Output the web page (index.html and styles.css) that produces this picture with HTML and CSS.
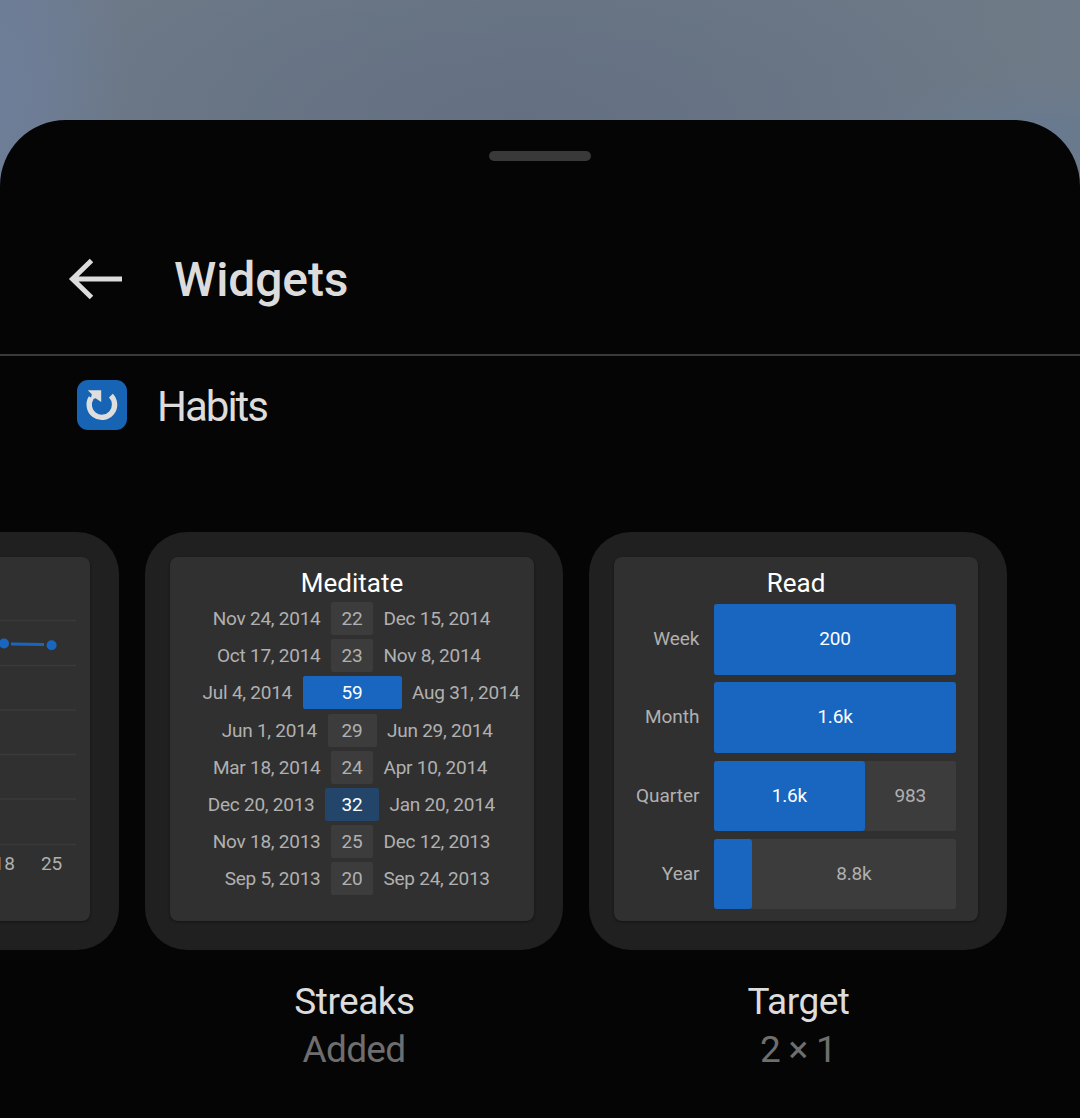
FILE: index.html
```html
<!DOCTYPE html>
<html lang="en">
<head>
<meta charset="utf-8">
<title>Widgets</title>
<link rel="stylesheet" href="styles.css">
</head>
<body>
<main class="sheet">
  <div class="handle"></div>
  <header class="header">
    <svg class="back" width="56" height="44" viewBox="0 0 56 44"><path d="M55 22H5M24.500 3.500L5.500 22l19 18.500" fill="none" stroke="#dcdcdc" stroke-width="5"/></svg>
    <h1 class="title">Widgets</h1>
  </header>
  <section class="app">
    <svg class="app-icon" width="50" height="50" viewBox="0 0 50 50">
      <rect width="50" height="50" rx="11" fill="#1764b4"/>
      <path d="M33.900 15.700A12.700 12.700 0 1 1 14.200 17.800" fill="none" stroke="#dedede" stroke-width="5.400"/>
      <path d="M10.800 10.300H24.200V22L18.500 18.200L13.500 20L14.800 14.300Z" fill="#dedede"/>
    </svg>
    <h2 class="app-name">Habits</h2>
  </section>
  <div class="carousel">
    <article class="item">
      <div class="card"><div class="preview">
        <svg class="chart" width="364" height="364" viewBox="0 0 364 364">
          <path d="M20 63.500H350M20 108.500H350M20 153H350M20 197.500H350M20 242H350M20 287.500H350" stroke="#3a3a3a" stroke-width="1.500"/>
          <path d="M285 87L318 87.600" stroke="#1866c0" stroke-width="3"/>
          <circle cx="278" cy="86.500" r="5" fill="#1866c0"/><circle cx="325.600" cy="88.200" r="5" fill="#1866c0"/>
          <g class="axis"><text x="278.300" y="313.300">18</text><text x="325.600" y="313.300">25</text></g>
        </svg>
      </div></div>
    </article>
    <article class="item">
      <div class="card"><div class="preview">
        <h3 class="habit">Meditate</h3>
        <div class="streaks">
          <div class="streak"><span class="from">Nov 24, 2014</span><b class="run" style="width:42px">22</b><span>Dec 15, 2014</span></div>
          <div class="streak"><span class="from">Oct 17, 2014</span><b class="run" style="width:42px">23</b><span>Nov 8, 2014</span></div>
          <div class="streak"><span class="from">Jul 4, 2014</span><b class="run best" style="width:99px">59</b><span>Aug 31, 2014</span></div>
          <div class="streak"><span class="from">Jun 1, 2014</span><b class="run" style="width:49px">29</b><span>Jun 29, 2014</span></div>
          <div class="streak"><span class="from">Mar 18, 2014</span><b class="run" style="width:42px">24</b><span>Apr 10, 2014</span></div>
          <div class="streak"><span class="from">Dec 20, 2013</span><b class="run good" style="width:54px">32</b><span>Jan 20, 2014</span></div>
          <div class="streak"><span class="from">Nov 18, 2013</span><b class="run" style="width:42px">25</b><span>Dec 12, 2013</span></div>
          <div class="streak"><span class="from">Sep 5, 2013</span><b class="run" style="width:42px">20</b><span>Sep 24, 2013</span></div>
        </div>
      </div></div>
      <h3 class="name">Streaks</h3>
      <p class="size">Added</p>
    </article>
    <article class="item">
      <div class="card"><div class="preview">
        <h3 class="habit">Read</h3>
        <div class="targets">
          <span class="period">Week</span><div class="bar"><b class="done" style="width:100%">200</b></div>
          <span class="period">Month</span><div class="bar"><b class="done" style="width:100%">1.6k</b></div>
          <span class="period">Quarter</span><div class="bar"><b class="done" style="width:62.200%">1.6k</b><span class="left">983</span></div>
          <span class="period">Year</span><div class="bar"><b class="done" style="width:15.600%"></b><span class="left">8.8k</span></div>
        </div>
      </div></div>
      <h3 class="name">Target</h3>
      <p class="size">2 × 1</p>
    </article>
  </div>
</main>
</body>
</html>
```
FILE: styles.css
```css
* { box-sizing: border-box; margin: 0; }
body {
  height: 1118px;
  padding-top: 120px;
  overflow: hidden;
  font-family: Roboto, "Liberation Sans", sans-serif;
  background:
    radial-gradient(ellipse 130px 260px at 0 90px, #6e7e98 0%, #6e7e9800 100%),
    radial-gradient(ellipse 180px 60px at 1040px 135px, #687a90 0%, #687a9000 100%),
    radial-gradient(ellipse 520px 190px at 520px 120px, #647082 0%, #64708200 100%),
    linear-gradient(90deg, #6d7b90, #6d7987 12%, #697685 50%, #6f7a87);
}
.sheet {
  height: 998px;
  padding-top: 31px;
  background: #050505;
  border-radius: 66px 66px 0 0;
  overflow: hidden;
}
.handle { width: 102px; height: 10px; margin: 0 auto; border-radius: 5px; background: #393939; }
.header {
  display: flex;
  align-items: center;
  gap: 50px;
  height: 195px;
  padding: 42px 0 0 67px;
  border-bottom: 2px solid #3a3a3a;
}
.back { flex: none; margin-right: 1px; }
.title { padding-top: 2px; font-size: 48px; line-height: 56px; font-weight: 500; letter-spacing: -0.100px; color: #dcdcdc; }
.app { display: flex; align-items: center; gap: 30px; height: 50px; margin: 24px 0 0 77px; }
.app-name { padding-top: 3px; font-size: 42px; line-height: 50px; font-weight: 400; letter-spacing: -2px; color: #dcdcdc; }
.carousel { display: flex; gap: 26px; margin: 102px 0 0 -299px; }
.item { flex: 0 0 418px; text-align: center; }
.card { height: 418px; padding: 25px; border-radius: 42px; background: #202020; }
.preview {
  width: 364px;
  height: 364px;
  border-radius: 8px;
  background: #303030;
  box-shadow: 0 1px 3px #0006;
  color: #b0b0b0;
  font-size: 19px;
}
.chart { display: block; }
.axis { fill: #b0b0b0; text-anchor: middle; }
.habit { height: 45px; padding-top: 10px; font-size: 26px; line-height: 32px; font-weight: 400; color: #fff; }
.streaks { display: flex; flex-direction: column; gap: 4.200px; }
.streak {
  display: grid;
  grid-template: 33px / 1fr auto 1fr;
  gap: 10.500px;
  line-height: 33.600px;
  letter-spacing: -0.250px;
  text-align: left;
  white-space: nowrap;
}
.from { text-align: right; }
.run { border-radius: 2px; background: #3c3c3c; font-weight: 400; text-align: center; }
.best { background: #1866c0; color: #fff; }
.good { background: #24456a; color: #fff; }
.targets {
  display: grid;
  grid-template-columns: 85.500px 242px;
  grid-auto-rows: 70.300px;
  gap: 7.900px 14.500px;
  padding-top: 2.300px;
  line-height: 70px;
}
.period { text-align: right; }
.bar { display: flex; background: #3c3c3c; border-radius: 2px; letter-spacing: -0.200px; }
.done { flex: none; border-radius: 3px; background: #1866c0; color: #fff; font-weight: 400; }
.left { flex: 1; }
.name { margin-top: 28px; padding-left: 1px; font-size: 37px; line-height: 48px; font-weight: 400; letter-spacing: -0.500px; color: #dcdcdc; }
.size { font-size: 37px; line-height: 48px; letter-spacing: -0.700px; color: #6e6e6e; }
```
